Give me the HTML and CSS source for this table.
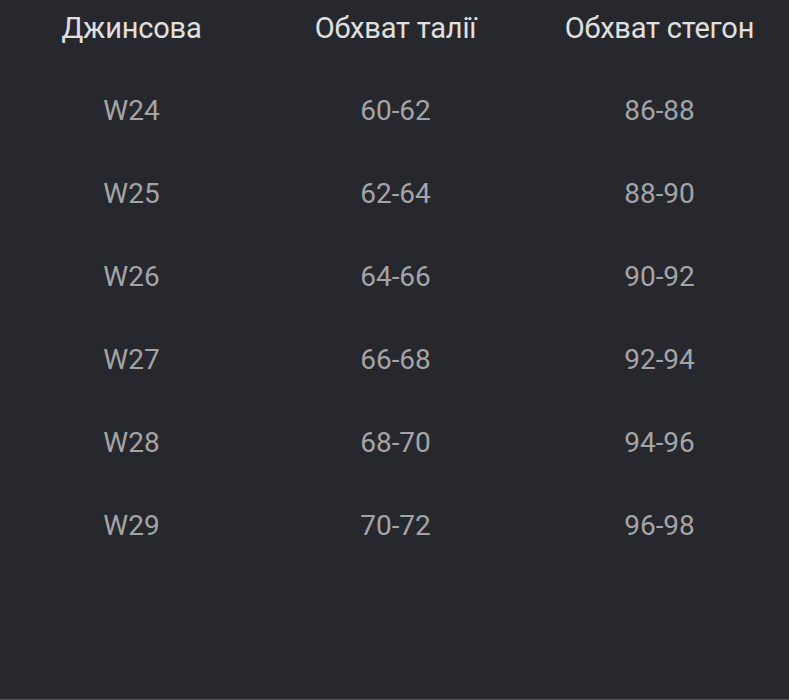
FILE: index.html
```html
<!DOCTYPE html>
<html lang="uk">
<head>
<meta charset="utf-8">
<link rel="stylesheet" href="styles.css">
</head>
<body>
<div class="page">
  <div class="row head">
    <div class="cell">Джинсова</div>
    <div class="cell">Обхват талії</div>
    <div class="cell">Обхват стегон</div>
  </div>
  <div class="body">
    <div class="row"><div class="cell">W24</div><div class="cell">60-62</div><div class="cell">86-88</div></div>
    <div class="row"><div class="cell">W25</div><div class="cell">62-64</div><div class="cell">88-90</div></div>
    <div class="row"><div class="cell">W26</div><div class="cell">64-66</div><div class="cell">90-92</div></div>
    <div class="row"><div class="cell">W27</div><div class="cell">66-68</div><div class="cell">92-94</div></div>
    <div class="row"><div class="cell">W28</div><div class="cell">68-70</div><div class="cell">94-96</div></div>
    <div class="row"><div class="cell">W29</div><div class="cell">70-72</div><div class="cell">96-98</div></div>
  </div>
</div>
</body>
</html>
```
FILE: styles.css
```css
html, body {
  margin: 0;
  padding: 0;
  background: #27282d;
}
.page {
  width: 789px;
  height: 699px;
  border-bottom: 1px solid #56575b;
  overflow: hidden;
  font-family: Roboto, "Noto Sans", sans-serif;
  font-size: 28px;
  color: #a4a4a7;
}
.row {
  display: grid;
  grid-template-columns: 263px 265px 263px;
  height: 83px;
  line-height: 83px;
}
.cell {
  text-align: center;
  white-space: nowrap;
}
.head {
  height: 56px;
  line-height: 56px;
  font-size: 29px;
  letter-spacing: -0.2px;
  color: #e0e0e0;
}
.body {
  padding-top: 13px;
}
```
